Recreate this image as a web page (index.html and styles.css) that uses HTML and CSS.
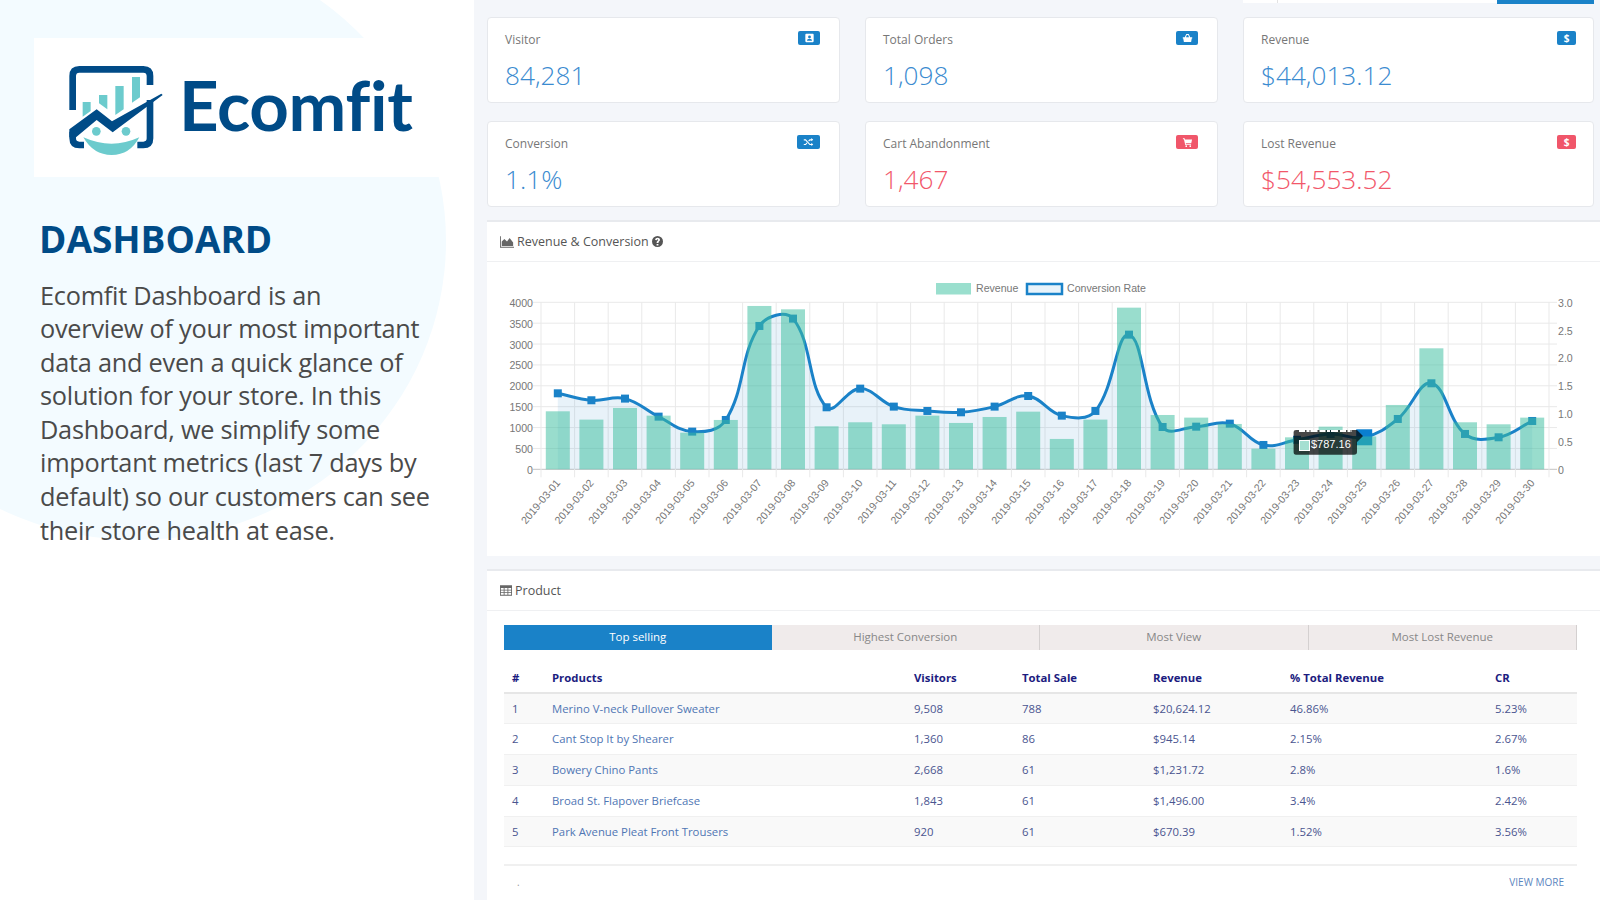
FILE: index.html
```html
<!doctype html>
<html>
<head>
<meta charset="utf-8">
<title>Ecomfit Dashboard</title>
<link rel="stylesheet" href="styles.css">
</head>
<body>
<section class="intro">
	<div class="introCircle"></div>
	<div class="logoBox">
		<svg class="logoMark" viewBox="0 0 420 360">
			<path class="logoFrame" d="M68 180V78Q68 58 88 58H280Q300 58 300 78V105M300 150V265Q300 285 280 285H262M68 245V265Q68 285 88 285H102"/>
			<path class="logoTeal" d="M98 156H122V183L98 200ZM147 135H172V178L147 160ZM196 108H221V178L196 195ZM246 81H270V142L246 158Z"/>
			<polygon class="logoBand" points="58,238 140,178 186,214 334,131 338,135 188,247 140,210 78,262 58,262"/>
			<circle class="logoTeal" cx="139" cy="244" r="13"/>
			<circle class="logoTeal" cx="228" cy="244" r="13"/>
			<path class="logoTeal" d="M100 262Q185 300 268 262Q240 315 185 315Q130 315 100 262Z"/>
		</svg>
		<span class="logoName">Ecomfit</span>
	</div>
	<h1 class="introTitle">DASHBOARD</h1>
	<p class="introText">Ecomfit Dashboard is an<br>overview of your most important<br>data and even a quick glance of<br>solution for your store. In this<br>Dashboard, we simplify some<br>important metrics (last 7 days by<br>default) so our customers can see<br>their store health at ease.</p>
</section>

<main class="main">
	<div class="dateBar"><span class="dateCell"></span><span class="dateField"></span><span class="dateBtn"></span></div>

	<div class="stats">
		<div class="stat">
			<div class="statHead">Visitor<span class="badge"><svg viewBox="0 0 12 12"><path d="M2 1H10Q11 1 11 2V10Q11 11 10 11H2Q1 11 1 10V2Q1 1 2 1ZM6 3A1.7 1.7 0 1 0 6 6.4A1.7 1.7 0 1 0 6 3ZM3 9.4H9C9 7.8 8 7 6 7S3 7.8 3 9.4Z" fill-rule="evenodd"/></svg></span></div>
			<div class="statNum">84,281</div>
		</div>
		<div class="stat">
			<div class="statHead">Total Orders<span class="badge"><svg viewBox="0 0 14 12"><path d="M1 5H13V6.5H12.4L11.6 11H2.4L1.6 6.5H1ZM3.5 5L5.5 1H8.5L10.5 5H9L7.8 2.3H6.2L5 5Z"/></svg></span></div>
			<div class="statNum">1,098</div>
		</div>
		<div class="stat">
			<div class="statHead">Revenue<span class="badge badgeNarrow">$</span></div>
			<div class="statNum">$44,013.12</div>
		</div>
		<div class="stat">
			<div class="statHead">Conversion<span class="badge badgeWide"><svg viewBox="0 0 14 12"><path d="M1 2.6H3.6L9 8.4H10.6V7L13 9.1L10.6 11V9.8H8.4L3 4H1ZM1 8.4H3L4.6 6.6L5.6 7.6L3.6 9.8H1ZM8.4 2.6H10.6V1L13 3.1L10.6 5.2V4H9L7.6 5.5L6.6 4.5Z"/></svg></span></div>
			<div class="statNum">1.1%</div>
		</div>
		<div class="stat">
			<div class="statHead">Cart Abandonment<span class="badge badgeRed"><svg viewBox="0 0 13 12"><path d="M1 1.5H3L3.4 3H12L11 7.5H4.4L4.7 8.6H10.8V9.7H3.8L2.2 2.6H1ZM5 10A1 1 0 1 0 5 12A1 1 0 1 0 5 10ZM9.8 10A1 1 0 1 0 9.8 12A1 1 0 1 0 9.8 10Z"/></svg></span></div>
			<div class="statNum statRed">1,467</div>
		</div>
		<div class="stat">
			<div class="statHead">Lost Revenue<span class="badge badgeNarrow badgeRed">$</span></div>
			<div class="statNum statRed">$54,553.52</div>
		</div>
	</div>

	<section class="panel panelChart">
		<h2 class="panelHead">
			<svg class="headIcon" viewBox="0 0 16 13"><path d="M0 0H1V12H16V13H0ZM2 11V6L5 3L8 6L11 2L15 7V11Z"/></svg>
			Revenue &amp; Conversion
			<svg class="helpIcon" viewBox="0 0 12 12"><path fill-rule="evenodd" d="M6 0A6 6 0 1 0 6 12A6 6 0 1 0 6 0ZM5 8.6H7V10.4H5ZM3.4 4.4C3.6 2.9 4.6 2 6.1 2C7.6 2 8.7 2.9 8.7 4.2C8.7 5.8 7 5.9 7 7.6H5C5 5.4 6.7 5.3 6.7 4.3C6.7 3.9 6.4 3.6 6 3.6C5.6 3.6 5.3 3.9 5.2 4.6Z"/></svg>
		</h2>
		<svg id="chart" class="chart" viewBox="487 263 1107 293"></svg>
	</section>

	<section class="panel panelTable">
		<h2 class="panelHead">
			<svg class="headIcon" viewBox="0 0 14 12"><path fill-rule="evenodd" d="M0 0H14V12H0ZM1 3V5H4.3V3ZM5.3 3V5H8.7V3ZM9.7 3V5H13V3ZM1 6V8H4.3V6ZM5.3 6V8H8.7V6ZM9.7 6V8H13V6ZM1 9V11H4.3V9ZM5.3 9V11H8.7V9ZM9.7 9V11H13V9Z"/></svg>
			Product
		</h2>
		<div class="tabs">
			<span class="tab active">Top selling</span>
			<span class="tab">Highest Conversion</span>
			<span class="tab">Most View</span>
			<span class="tab">Most Lost Revenue</span>
		</div>
		<table class="grid">
			<colgroup>
				<col class="colNo"><col class="colName"><col class="colVisit"><col class="colSale"><col class="colRev"><col class="colPct"><col class="colCr">
			</colgroup>
			<thead>
				<tr><th>#</th><th>Products</th><th>Visitors</th><th>Total Sale</th><th>Revenue</th><th>% Total Revenue</th><th>CR</th></tr>
			</thead>
			<tbody>
				<tr><td>1</td><td><a>Merino V-neck Pullover Sweater</a></td><td>9,508</td><td>788</td><td>$20,624.12</td><td>46.86%</td><td>5.23%</td></tr>
				<tr><td>2</td><td><a>Cant Stop It by Shearer</a></td><td>1,360</td><td>86</td><td>$945.14</td><td>2.15%</td><td>2.67%</td></tr>
				<tr><td>3</td><td><a>Bowery Chino Pants</a></td><td>2,668</td><td>61</td><td>$1,231.72</td><td>2.8%</td><td>1.6%</td></tr>
				<tr><td>4</td><td><a>Broad St. Flapover Briefcase</a></td><td>1,843</td><td>61</td><td>$1,496.00</td><td>3.4%</td><td>2.42%</td></tr>
				<tr><td>5</td><td><a>Park Avenue Pleat Front Trousers</a></td><td>920</td><td>61</td><td>$670.39</td><td>1.52%</td><td>3.56%</td></tr>
			</tbody>
		</table>
		<div class="tableFoot"><span class="footDot">.</span><a class="viewMore">VIEW MORE</a></div>
	</section>
</main>
<script src="chart.js"></script>
</body>
</html>
```
FILE: styles.css
```css
html,body{margin:0;height:100%;overflow:hidden;}
body{display:flex;width:1600px;height:900px;background:#f4f6fa;font-family:"Open Sans","Liberation Sans",sans-serif;color:#555;}

.intro{position:relative;flex:none;width:474px;height:900px;overflow:hidden;background:#fff;}
.introCircle{position:absolute;left:-172px;top:-58px;width:618px;height:598px;border-radius:50%;background:#f3fbff;}
.logoBox{position:relative;display:flex;align-items:flex-start;margin:38px 0 0 34px;height:139px;background:#fff;}
.logoMark{flex:none;width:140px;height:120px;margin:12px 0 0 16px;}
.logoFrame{fill:none;stroke:#004b87;stroke-width:20;}
.logoTeal{fill:#6ccbcd;}
.logoBand{fill:#004b87;}
.logoName{margin:25px 0 0 -11px;font-family:Lato,"Open Sans",sans-serif;font-size:69px;line-height:84px;font-weight:700;color:#004b87;letter-spacing:-0.3px;}
.introTitle{position:relative;margin:40px 0 0 39px;font-size:37px;line-height:44px;font-weight:700;color:#004b87;}
.introText{position:relative;margin:17.5px 0 0 40px;font-size:25.3px;line-height:33.6px;color:#4a4a4a;letter-spacing:-0.25px;white-space:nowrap;}

.main{flex:none;width:1113px;margin-left:13px;}
.dateBar{display:flex;height:4px;margin-left:756px;}
.dateCell{width:34px;height:3px;background:#fff;border-right:1px solid #e3e3e3;}
.dateField{width:219px;height:3px;background:#fff;}
.dateBtn{width:97px;background:#1a82c8;}

.stats{display:grid;grid-template-columns:353px 353px 351px;grid-auto-rows:86px;column-gap:25px;row-gap:18px;margin-top:13px;}
.stat{box-sizing:border-box;padding:14px 19px 0 17px;background:#fff;border:1px solid #e6e8ec;border-radius:4px;}
.stat:nth-child(3n){padding-right:17px;}
.statHead{display:flex;justify-content:space-between;height:20px;font-size:12px;line-height:16px;color:#777;}
.statNum{margin-top:7px;font-size:26.2px;line-height:32px;font-weight:300;color:#3b8bd0;}
.statRed{color:#f2576a;}
.badge{display:flex;align-items:center;justify-content:center;box-sizing:border-box;width:22px;height:14px;margin-top:-1px;border-radius:2px;background:#1a82c8;color:#fff;font-size:10px;line-height:14px;font-weight:700;}
.badge svg{width:11px;height:10px;fill:#fff;}
.badgeNarrow{width:19px;}
.badgeWide{width:23px;}
.badgeRed{background:#f0566a;}

.panel{background:#fff;border-top:2px solid #e8eaee;}
.panelChart{height:334px;margin-top:13px;}
.panelTable{margin-top:13px;height:341px;}
.panelHead{display:flex;align-items:center;gap:3px;box-sizing:border-box;height:40px;margin:0;padding:0 13px;border-bottom:1px solid #eff0f2;font-size:12.5px;line-height:16px;font-weight:400;color:#555;}
.headIcon{width:14px;height:12px;fill:#666;}
.panelTable .headIcon{width:12px;height:11px;}
.helpIcon{width:11px;height:11px;fill:#555;}
.chart{display:block;width:1107px;height:293px;}
.chart text{font-family:"Liberation Sans",Arial,sans-serif;font-size:10.6px;fill:#777;}
.chart .tipText{font-size:11px;fill:#fff;}

.tabs{display:flex;width:1073px;margin:14px 0 0 17px;height:25px;}
.tab{flex:1;box-sizing:border-box;background:#f0ebeb;border-right:1px solid #d4d0d0;color:#888;font-size:11.5px;line-height:24px;text-align:center;}
.tab.active{background:#1a82c8;border-right:none;color:#fff;}

.grid{width:1073px;margin:13px 0 0 17px;border-collapse:collapse;table-layout:fixed;font-size:11.35px;line-height:16px;color:#4a5590;}
.colNo{width:40px;}.colName{width:362px;}.colVisit{width:108px;}.colSale{width:131px;}.colRev{width:137px;}.colPct{width:205px;}.colCr{width:90px;}
.grid th{height:30px;padding:0 8px;box-sizing:border-box;border-bottom:2px solid #e6e6e6;text-align:left;font-weight:700;color:#1c1c80;}
.grid td{height:30.8px;padding:0 8px;box-sizing:border-box;border-bottom:1px solid #f0f0f0;}
.grid tbody tr:nth-child(odd){background:#f9f9f9;}
.grid a{color:#4f76b4;}

.tableFoot{display:flex;justify-content:space-between;box-sizing:border-box;width:1073px;height:36px;margin:17px 0 0 17px;padding:8px 13px 0 13px;border-top:2px solid #f0f0f0;font-size:10px;line-height:16px;}
.footDot{color:#999;}
.viewMore{color:#5b86c0;}
```
FILE: chart.js
```js
var oChart=document.getElementById("chart");
var aRevenue=[1389,1190,1469,1285,878,1182,3912,3832,1030,1126,1078,1285,1110,1253,1381,727,1190,3872,1301,1238,1086,495,766,1022,787.16,1541,2898,1126,1078,1238];
var aRate=[1.365,1.24,1.27,0.946,0.677,0.886,2.575,2.707,1.114,1.449,1.126,1.048,1.024,1.126,1.317,0.964,1.048,2.419,0.76,0.766,0.82,0.437,0.53,0.635,0.575,0.904,1.545,0.635,0.575,0.868];
var iLeft=541,iRight=1549,iTop=303.3,iBottom=470.3;
var iStep=(iRight-iLeft)/30;
var iRow=(iBottom-iTop)/8;
var sBlue="#1a82c8";

function add(sTag,oAttr,sText)
{
	var oEl=document.createElementNS("http://www.w3.org/2000/svg",sTag);
	for(var k in oAttr)
	{
		oEl.setAttribute(k,oAttr[k]);
	}
	if(sText)
	{
		oEl.textContent=sText;
	}
	oChart.appendChild(oEl);
	return oEl;
}
function pad(i)
{
	return i<10?"0"+i:""+i;
}
function xAt(i)
{
	return iLeft+iStep*(i+0.5);
}
function f(n)
{
	return n.toFixed(1);
}

// legend
add("rect",{x:936,y:284,width:35,height:11.5,fill:"#9adfce"});
add("text",{x:976,y:293},"Revenue");
add("rect",{x:1027,y:285,width:35,height:10,fill:"#e8f3fa",stroke:sBlue,"stroke-width":2.5});
add("text",{x:1067,y:293},"Conversion Rate");

// grid
var i;
for(i=0;i<=8;i++)
{
	var iY=iTop+iRow*i;
	add("line",{x1:iLeft-8,y1:iY,x2:iRight+8,y2:iY,stroke:i==8?"#c4c4c4":"#e9e9e9"});
	add("text",{x:iLeft-8,y:iY+4.5,"text-anchor":"end"},""+(8-i)*500);
}
var aRight=["3.0","2.5","2.0","1.5","1.0","0.5","0"];
for(i=0;i<aRight.length;i++)
{
	add("text",{x:iRight+9,y:iTop+4.5+(iBottom-iTop)/6*i},aRight[i]);
}
for(i=0;i<=30;i++)
{
	var iX=iLeft+iStep*i;
	add("line",{x1:iX,y1:iTop,x2:iX,y2:iBottom+8,stroke:"#e9e9e9"});
}
for(i=0;i<30;i++)
{
	add("text",{x:xAt(i)+3,y:iBottom+14,"text-anchor":"end",transform:"rotate(-50 "+f(xAt(i)+3)+" "+f(iBottom+14)+")"},"2019-03-"+pad(i+1));
}

// conversion line, same spline as the chart lib (tension 0.4)
var aP=[];
for(i=0;i<30;i++)
{
	aP.push({x:xAt(i),y:iBottom-aRate[i]/3*(iBottom-iTop)});
}
var sD="M"+f(aP[0].x)+" "+f(aP[0].y);
for(i=0;i<29;i++)
{
	var p0=aP[i-1]||aP[i],p1=aP[i],p2=aP[i+1],p3=aP[i+2]||p2;
	var d1=Math.hypot(p1.x-p0.x,p1.y-p0.y),d2=Math.hypot(p2.x-p1.x,p2.y-p1.y),d3=Math.hypot(p3.x-p2.x,p3.y-p2.y);
	var t1=0.4*d2/(d1+d2),t2=0.4*d2/(d2+d3);
	sD+="C"+f(p1.x+t1*(p2.x-p0.x))+" "+f(p1.y+t1*(p2.y-p0.y))+" "+f(p2.x-t2*(p3.x-p1.x))+" "+f(p2.y-t2*(p3.y-p1.y))+" "+f(p2.x)+" "+f(p2.y);
}
add("path",{d:sD+"L"+f(aP[29].x)+" "+iBottom+"L"+f(aP[0].x)+" "+iBottom+"Z",fill:"rgba(26,130,200,0.1)"});
add("path",{d:sD,fill:"none",stroke:sBlue,"stroke-width":3});
for(i=0;i<30;i++)
{
	var iS=i==24?16:8;
	add("rect",{x:aP[i].x-iS/2,y:aP[i].y-iS/2,width:iS,height:iS,fill:i==24?"#0a7fd0":sBlue});
}

// bars go over the line, it shows through them
for(i=0;i<30;i++)
{
	var iH=aRevenue[i]/4000*(iBottom-iTop);
	add("rect",{x:xAt(i)-12,y:iBottom-iH,width:24,height:iH,fill:"rgba(60,190,160,0.52)"});
}

// tooltip of 03-25
add("path",{d:"M1296 431H1357L1363 437L1357 443V453Q1357 455.7 1354 455.7H1296Q1293.6 455.7 1293.6 453V433Q1293.6 431 1296 431Z",fill:"rgba(0,0,0,0.72)"});
add("line",{x1:1299,y1:432,x2:1352,y2:432,stroke:"#fff","stroke-width":2,"stroke-dasharray":"6 1.5 3 1 7 2"});
add("rect",{x:1299.5,y:441.5,width:10,height:10,fill:"#a5e0d2",stroke:"#fff"});
add("text",{"class":"tipText",x:1311,y:449},"$787.16");
```
